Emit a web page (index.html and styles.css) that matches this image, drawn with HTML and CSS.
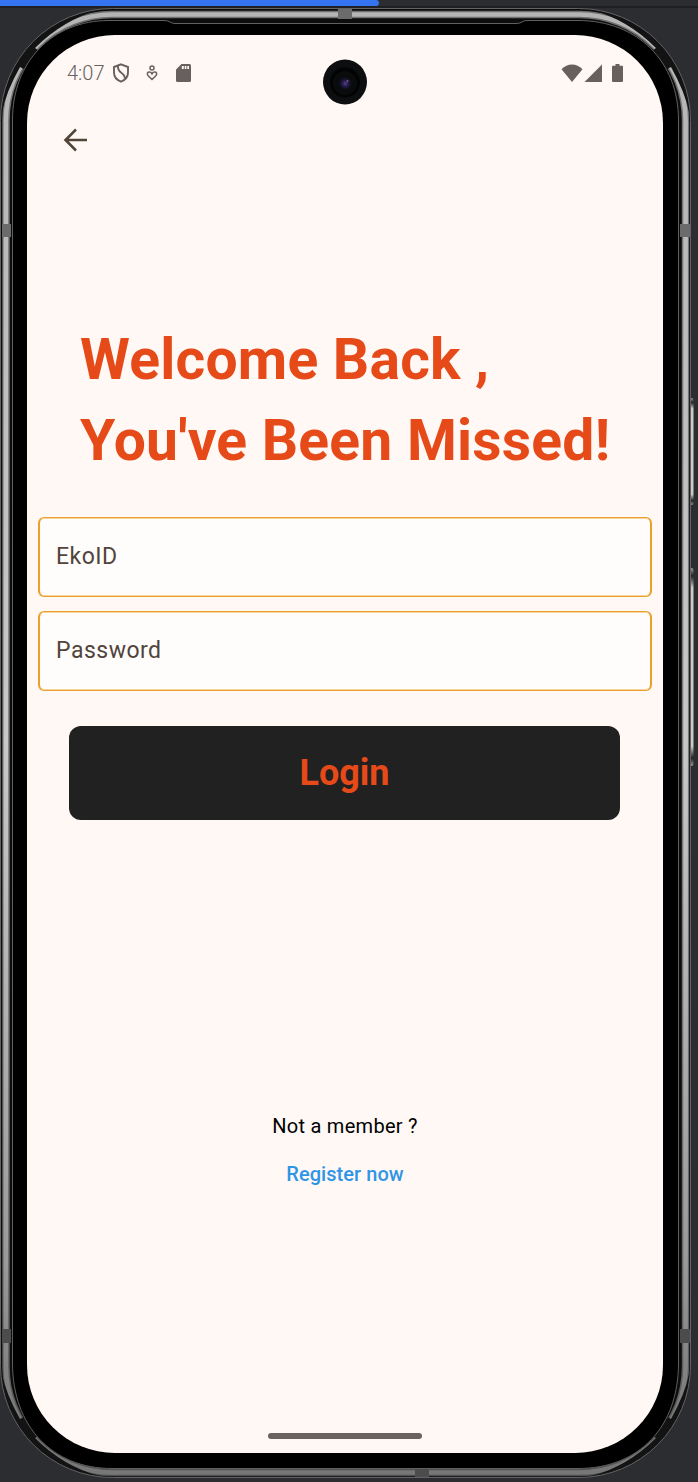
FILE: index.html
```
<!DOCTYPE html>
<html lang="en">
<head>
<meta charset="utf-8">
<title>Login</title>
<link rel="stylesheet" href="styles.css">
</head>
<body>
<div class="stage">
  <svg class="device" viewBox="0 0 698 1482" aria-hidden="true">
    <defs>
      <linearGradient id="rimEdge" gradientUnits="userSpaceOnUse" x1="0" y1="0" x2="0" y2="1482">
        <stop offset="0" stop-color="#707070"/><stop offset=".5" stop-color="#7a7a7a"/><stop offset=".85" stop-color="#666"/><stop offset="1" stop-color="#505050"/>
      </linearGradient>
      <linearGradient id="rimCore" gradientUnits="userSpaceOnUse" x1="0" y1="0" x2="0" y2="1482">
        <stop offset="0" stop-color="#b4b4b4"/><stop offset=".5" stop-color="#c8c8c8"/><stop offset=".85" stop-color="#9a9a9a"/><stop offset=".96" stop-color="#777"/><stop offset="1" stop-color="#777"/>
      </linearGradient>
      <linearGradient id="key" x1="0" y1="0" x2="0" y2="1">
        <stop offset="0" stop-color="#999"/><stop offset=".04" stop-color="#222"/><stop offset=".1" stop-color="#c9cbc9"/><stop offset=".9" stop-color="#c9cbc9"/><stop offset=".96" stop-color="#222"/><stop offset="1" stop-color="#999"/>
      </linearGradient>
      <radialGradient id="lens"><stop offset="0" stop-color="#55418c"/><stop offset=".45" stop-color="#241c48"/><stop offset="1" stop-color="#090a0e"/></radialGradient>
      <path id="shade" d="M1 118A111 110 0 0 1 112 9.500L100 10Q64 19 35 48L42 53 29 72 20 67Q6 92 2 112Z"/>
    </defs>
    <rect x="689" y="398" width="4.500" height="107" rx="2" fill="url(#key)"/>
    <rect x="689" y="568" width="4.500" height="198" rx="2" fill="url(#key)"/>
    <rect x=".5" y="8.500" width="690" height="1469" rx="112" fill="#0c0c0c"/>
    <g fill="none">
      <rect x="6" y="14.500" width="679.500" height="1458" rx="106" stroke="url(#rimEdge)" stroke-width="7.400"/>
      <rect x="5.900" y="14.500" width="679.700" height="1458" rx="106" stroke="url(#rimCore)" stroke-width="4.600"/>
    </g>
    <g fill="#131313">
      <use href="#shade"/>
      <use href="#shade" transform="translate(691 0) scale(-1 1)"/>
      <use href="#shade" transform="translate(0 1486) scale(1 -1)"/>
      <use href="#shade" transform="translate(691 1486) scale(-1 -1)"/>
    </g>
    <rect x=".5" y="8.500" width="690" height="1469" rx="112" fill="none" stroke="#626364"/>
    <path d="M109 20.500H164Q168 20.500 170 22T175 23.500H516Q520 23.500 522 22T527 20.500H578C638 20.500 678.500 62 678.500 120V1363C678.500 1426 640 1468.500 578 1468.500H112C52 1468.500 12.500 1426 12.500 1363V120C12.500 62 52 20.500 109 20.500Z" fill="#000" stroke="#606060"/>
    <g fill="#6b6b6b">
      <path d="M338 9h14v10h-14zM2 224h9v13H2zM680 224h10v13h-10z"/>
      <path fill="#4c4c4c" d="M2 1329h9v14H2zM680 1329h10v14h-10zM415 1469h14v8h-14z"/>
    </g>
  </svg>
  <div class="progress"><div class="progress-value"></div></div>
  <main class="screen">
    <header class="status">
      <span class="clock">4:07</span>
      <svg class="shield" viewBox="0 0 18 20"><path d="M9 1.300 16 4v5.500c0 4.100-2.700 7.500-7 9.200-4.300-1.700-7-5.100-7-9.200V4Z M6 2.800C5.600 6.800 7.300 8.300 9.300 9.800c2.600 1.900 3.900 3.200 3.400 6"/></svg>
      <svg class="care" viewBox="0 0 12 16"><circle cx="6" cy="3" r="2"/><path d="M6 14.500 2.200 10.800C.7 9.300 1.200 7.300 3 7.100c1.500-.2 2.400.6 3 1.800.6-1.200 1.500-2 3-1.800 1.800.2 2.300 2.200.8 3.700Z"/></svg>
      <svg class="card" viewBox="0 0 15 18"><path d="M5.500 0H13.500Q15 0 15 1.500V16.500Q15 18 13.500 18H1.500Q0 18 0 16.500V5.500Z"/><path class="pins" d="M5.800 2h2v3h-2zM8.700 2h1.700v3H8.700zM11.300 2h1.700v3h-1.700z"/></svg>
      <span class="spacer"></span>
      <svg class="wifi" viewBox="0 0 22 18"><path d="M11 18 .5 5.300Q5 .5 11 .5T21.500 5.300Z"/></svg>
      <svg class="signal" viewBox="0 0 18 18"><path d="M18 .5V18H.5Z"/></svg>
      <svg class="battery" viewBox="0 0 11 18"><path d="M3.500 0h4v1.800H10Q11 1.800 11 2.800V17Q11 18 10 18H1Q0 18 0 17V2.800Q0 1.800 1 1.800H3.500Z"/></svg>
    </header>
    <svg class="camera" viewBox="0 0 44 46"><ellipse cx="22" cy="23" rx="22" ry="22.500" fill="#0d0e0f"/><circle cx="22" cy="23.500" r="15" fill="#020303"/><circle cx="22" cy="24" r="12" fill="#090b0c"/><circle cx="22.300" cy="24.500" r="6.500" fill="url(#lens)"/><circle cx="24.500" cy="22" r="1" fill="#76558a"/></svg>
    <nav class="toolbar"><svg class="back" viewBox="0 0 24 24"><path d="M23.500 12H2M12.500 1.500 2 12l10.500 10.500"/></svg></nav>
    <h1 class="title"><span class="line-one">Welcome Back ,</span><br><span class="line-two">You've Been Missed!</span></h1>
    <form class="form">
      <div class="field"><span>EkoID</span></div>
      <div class="field"><span>Password</span></div>
      <button class="login" type="button">Login</button>
    </form>
    <footer class="signup"><span>Not a member ?</span><a class="register">Register now</a></footer>
    <div class="home-bar"></div>
  </main>
</div>
</body>
</html>
```
FILE: styles.css
```
* { box-sizing: border-box; }
body { margin: 0; background: #2b2d30; font-family: Roboto, sans-serif; }
.stage { position: relative; width: 698px; height: 1482px; overflow: hidden; padding: 35px 35px 29px 27px; }
.device { position: absolute; left: 0; top: 0; width: 698px; height: 1482px; }
.progress { position: absolute; left: 0; top: 0; width: 698px; height: 8px; border-bottom: 2px solid #1f2023; }
.progress-value { width: 379px; height: 6px; background: #3574f0; border-radius: 0 3px 3px 0; }
.screen { position: relative; display: flex; flex-direction: column; width: 636px; height: 1418px; background: #fff8f5; border-radius: 88px; overflow: hidden; }
.status { display: flex; align-items: center; height: 76px; padding: 0 40px; color: #66615f; }
.status svg { fill: #66615f; flex: none; }
.clock { font-size: 20px; font-weight: 350; width: 45px; }
.status .shield { width: 18px; height: 20px; fill: none; stroke: #66615f; stroke-width: 1.9; }
.status .care { width: 12px; height: 16px; margin-left: 16px; fill: none; stroke: #66615f; stroke-width: 1.5; }
.card { width: 15px; height: 18px; margin-left: 18px; }
.status .pins { fill: #fff8f5; }
.spacer { flex: 1; }
.wifi { width: 22px; height: 18px; }
.signal { width: 18px; height: 18px; margin-left: 1px; }
.battery { width: 11px; height: 18px; margin-left: 10px; }
.camera { position: absolute; left: 296px; top: 24px; width: 44px; height: 46px; }
.toolbar { height: 58px; padding: 17px 0 0 36px; }
.back { display: block; width: 25px; height: 24px; fill: none; stroke: #51443b; stroke-width: 2.6; }
.title { margin: 150px 0 0 53px; height: 161px; font-size: 57px; line-height: 81px; font-weight: 700; letter-spacing: .22px; color: #e64a19; white-space: nowrap; }
.form { display: flex; flex-direction: column; gap: 14px; margin: 37px 11px 0; }
.field { display: flex; align-items: center; height: 80px; padding: 0 0 2px 16px; border: solid #eaa02a; border-width: 1px 2px; box-shadow: inset 0 1px rgba(237, 165, 47, .45), inset 0 -1px rgba(237, 165, 47, .45); border-radius: 6px; background: #fffdfc; color: #51443b; font-size: 23px; letter-spacing: .5px; }
.login { height: 94px; margin: 21px 32px 0 31px; border: 0; border-radius: 12px; background: #212121; color: #e64a19; font: 700 36px Roboto, sans-serif; }
.signup { display: flex; flex-direction: column; align-items: center; gap: 23px; margin-top: 294px; font-size: 20px; line-height: 25px; letter-spacing: .28px; color: #000; }
.register { color: #2f95e6; font-weight: 500; letter-spacing: .05px; }
.home-bar { width: 154px; height: 6px; margin: auto auto 14px 241px; border-radius: 3px; background: #69625f; }
```
